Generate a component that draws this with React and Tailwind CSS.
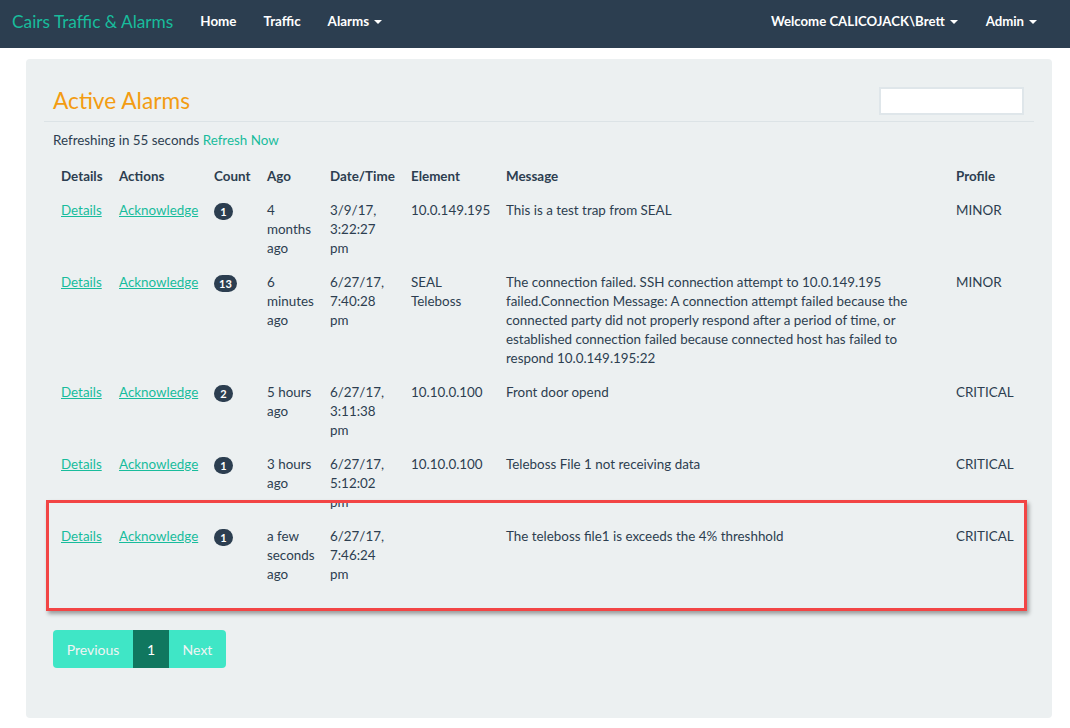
const alarms = [
  {
    count: '1',
    ago: ['4', 'months', 'ago'],
    date: ['3/9/17,', '3:22:27', 'pm'],
    element: ['10.0.149.195'],
    message: ['This is a test trap from SEAL'],
    profile: 'MINOR',
  },
  {
    count: '13',
    ago: ['6', 'minutes', 'ago'],
    date: ['6/27/17,', '7:40:28', 'pm'],
    element: ['SEAL', 'Teleboss'],
    message: [
      'The connection failed. SSH connection attempt to 10.0.149.195',
      'failed.Connection Message: A connection attempt failed because the',
      'connected party did not properly respond after a period of time, or',
      'established connection failed because connected host has failed to',
      'respond 10.0.149.195:22',
    ],
    profile: 'MINOR',
  },
  {
    count: '2',
    ago: ['5 hours', 'ago'],
    date: ['6/27/17,', '3:11:38', 'pm'],
    element: ['10.10.0.100'],
    message: ['Front door opend'],
    profile: 'CRITICAL',
  },
  {
    count: '1',
    ago: ['3 hours', 'ago'],
    date: ['6/27/17,', '5:12:02', 'pm'],
    element: ['10.10.0.100'],
    message: ['Teleboss File 1 not receiving data'],
    profile: 'CRITICAL',
  },
  {
    count: '1',
    ago: ['a few', 'seconds', 'ago'],
    date: ['6/27/17,', '7:46:24', 'pm'],
    element: [],
    message: ['The teleboss file1 is exceeds the 4% threshhold'],
    profile: 'CRITICAL',
  },
];

function Caret() {
  return (
    <span className="inline-block ml-[5px] align-middle w-0 h-0 border-l-[4px] border-r-[4px] border-t-[4px] border-l-transparent border-r-transparent border-t-white" />
  );
}

function Lines({ lines }) {
  return lines.map((l, i) => <div key={i} className="whitespace-nowrap">{l}</div>);
}

export default function App() {
  const td = 'align-top px-[8px] pt-[8px] pb-[7px] text-left';
  const th = 'align-top px-[8px] pt-[8px] pb-[7px] text-left font-bold';

  return (
    <div className="min-h-[728px] bg-white text-[#2c3e50] text-[13.4px] leading-[19px] font-['Lato','Liberation_Sans',sans-serif]">
      <nav className="h-[48px] bg-[#2c3e50] flex items-center pb-[6px]">
        <div className="pl-[12px] pr-[13px] text-[17.3px] text-[#18bc9c]">Cairs Traffic &amp; Alarms</div>
        <div className="flex text-white font-bold text-[13.4px]">
          <span className="px-[14px]">Home</span>
          <span className="px-[13px]">Traffic</span>
          <span className="px-[14px]">Alarms<Caret /></span>
        </div>
        <div className="ml-auto flex text-white font-bold text-[13.2px] pr-[33px]">
          <span className="px-[14px]">Welcome CALICOJACK\Brett<Caret /></span>
          <span className="pl-[14px]">Admin<Caret /></span>
        </div>
      </nav>

      <div className="relative ml-[26px] mt-[11px] w-[1026px] bg-[#ecf0f1] rounded-[4px] px-[18px] pt-[28px] pb-[50px]">
        <div className="flex items-center justify-between pl-[9px] pr-[10px] pb-[6px] border-b border-[#dce3e6]">
          <h1 className="text-[22.7px] leading-[28px] text-[#f39c12]">Active Alarms</h1>
          <input className="w-[145px] h-[28px] bg-white border-2 border-[#dfe6ea] outline-none" />
        </div>

        <div className="px-[9px]">
          <p className="mt-[9px]">
            Refreshing in 55 seconds <span className="text-[#18bc9c]">Refresh Now</span>
          </p>

          <table className="mt-[9px] w-[972px] table-fixed border-collapse">
            <colgroup>
              <col className="w-[58px]" />
              <col className="w-[95px]" />
              <col className="w-[53px]" />
              <col className="w-[63px]" />
              <col className="w-[81px]" />
              <col className="w-[95px]" />
              <col className="w-[450px]" />
              <col className="w-[77px]" />
            </colgroup>
            <thead>
              <tr>
                <th className={th}>Details</th>
                <th className={th}>Actions</th>
                <th className={th}>Count</th>
                <th className={th}>Ago</th>
                <th className={th}>Date/Time</th>
                <th className={th}>Element</th>
                <th className={th}>Message</th>
                <th className={th}>Profile</th>
              </tr>
            </thead>
            <tbody>
              {alarms.map((a, i) => (
                <tr key={i}>
                  <td className={td}>
                    <a className="text-[#18bc9c] underline">Details</a>
                  </td>
                  <td className={td}>
                    <a className="text-[#18bc9c] underline">Acknowledge</a>
                  </td>
                  <td className={td}>
                    <span className="inline-flex items-center justify-center min-w-[19px] h-[17px] px-[5px] mt-[2px] rounded-full bg-[#2c3e50] text-white text-[11px] font-bold leading-none">
                      {a.count}
                    </span>
                  </td>
                  <td className={td}><Lines lines={a.ago} /></td>
                  <td className={td}><Lines lines={a.date} /></td>
                  <td className={td}><Lines lines={a.element} /></td>
                  <td className={td}><Lines lines={a.message} /></td>
                  <td className={td}>{a.profile}</td>
                </tr>
              ))}
            </tbody>
          </table>

          <div className="mt-[39px] flex text-white text-[14px]">
            <span className="h-[38px] w-[80px] flex items-center justify-center bg-[#3fe6c6] rounded-l-[4px] text-[#f1f4f4]">Previous</span>
            <span className="h-[38px] w-[36px] flex items-center justify-center bg-[#10775f]">1</span>
            <span className="h-[38px] w-[57px] flex items-center justify-center bg-[#3fe6c6] rounded-r-[4px] text-[#f1f4f4]">Next</span>
          </div>
        </div>

        <div className="absolute left-[20px] top-[441px] w-[981px] h-[111px] border-[3px] border-[#f24545] shadow-[2px_3px_4px_rgba(0,0,0,0.35)] pointer-events-none" />
      </div>
    </div>
  );
}
